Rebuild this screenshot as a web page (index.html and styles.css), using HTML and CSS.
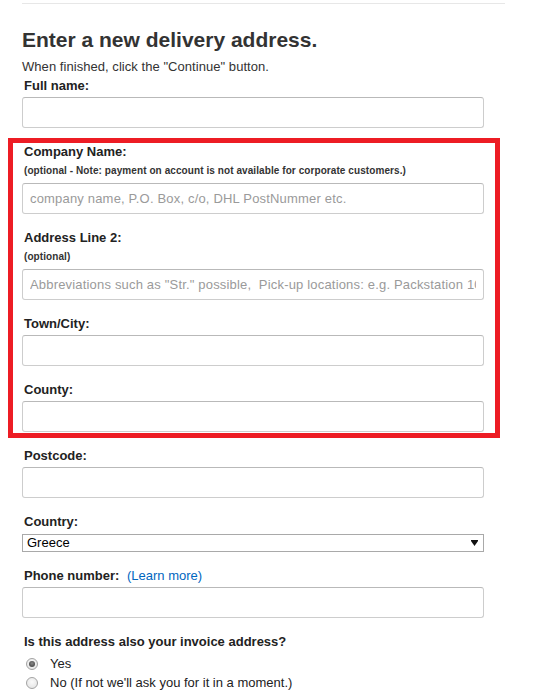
FILE: index.html
```html
<!DOCTYPE html>
<html lang="en">
<head>
<meta charset="utf-8">
<title>Enter a new delivery address</title>
<link rel="stylesheet" href="styles.css">
</head>
<body>
<div class="page">
  <div class="topline"></div>
  <h1 class="title">Enter a new delivery address.</h1>
  <p class="intro">When finished, click the "Continue" button.</p>
  <form class="form">
    <div class="field first">
      <label class="label">Full name:</label>
      <input class="input" type="text">
    </div>

    <div class="highlight">
      <div class="field first">
        <label class="label">Company Name:</label>
        <div class="note">(optional - Note: payment on account is not available for corporate customers.)</div>
        <input class="input" type="text" placeholder="company name, P.O. Box, c/o, DHL PostNummer etc.">
      </div>
      <div class="field">
        <label class="label">Address Line 2:</label>
        <div class="note">(optional)</div>
        <input class="input" type="text" placeholder="Abbreviations such as &quot;Str.&quot; possible, &#160;Pick-up locations: e.g. Packstation 101">
      </div>
      <div class="field">
        <label class="label">Town/City:</label>
        <input class="input" type="text">
      </div>
      <div class="field">
        <label class="label">County:</label>
        <input class="input" type="text">
      </div>
    </div>

    <div class="field after-box">
      <label class="label">Postcode:</label>
      <input class="input" type="text">
    </div>
    <div class="field">
      <label class="label">Country:</label>
      <div class="select-wrap">
        <select class="select">
          <option>Greece</option>
        </select>
        <svg class="select-arrow" width="7" height="6" viewBox="0 0 7 6"><path d="M0 0H7V1L3.5 6L0 1Z" fill="#111"/></svg>
      </div>
    </div>
    <div class="field">
      <label class="label">Phone number: <a class="learn" href="#">(Learn more)</a></label>
      <input class="input" type="text">
    </div>
    <div class="field">
      <div class="label">Is this address also your invoice address?</div>
      <div class="radios">
        <div class="radio-row"><span class="radio checked"></span><span>Yes</span></div>
        <div class="radio-row"><span class="radio"></span><span>No (If not we'll ask you for it in a moment.)</span></div>
      </div>
    </div>
  </form>
</div>
</body>
</html>
```

FILE: styles.css
```css
html, body {
  margin: 0;
  padding: 0;
  background: #fff;
}

body {
  font-family: "Liberation Sans", Arial, sans-serif;
  color: #111;
}

.page {
  width: 462px;
  padding-left: 22px;
  display: flex;
  flex-direction: column;
}

.topline {
  margin-top: 3px;
  margin-right: -21px;
  border-top: 1px solid #e7e7e7;
}

.title {
  margin: 24px 0 0 0;
  font-size: 21px;
  line-height: 24px;
  font-weight: bold;
  color: #333;
}

.intro {
  margin: 7px 0 0 0;
  font-size: 13px;
  line-height: 15px;
  color: #333;
  letter-spacing: 0.05px;
}

.form {
  display: flex;
  flex-direction: column;
  margin-top: 4px;
}

.field {
  display: flex;
  flex-direction: column;
  margin-top: 16px;
}

.field.first {
  margin-top: 0;
}

.field.after-box {
  margin-top: 10px;
}

.label {
  display: block;
  padding-left: 2px;
  font-size: 13px;
  line-height: 16px;
  font-weight: bold;
  color: #222;
  margin-bottom: 3px;
}

.note {
  padding-left: 2px;
  font-size: 10px;
  line-height: 14px;
  font-weight: bold;
  color: #333;
  letter-spacing: 0.08px;
  margin-top: 1px;
  margin-bottom: 5px;
}

.input {
  box-sizing: border-box;
  height: 31px;
  width: 100%;
  margin: 0;
  padding: 0 7px;
  border: 1px solid #cdcdcd;
  border-top-color: #b9b9b9;
  border-radius: 3px;
  background: #fff;
  font-family: "Liberation Sans", Arial, sans-serif;
  font-size: 13px;
  color: #111;
  outline: none;
}

.input::placeholder {
  color: #9a9a9a;
  opacity: 1;
  letter-spacing: 0.18px;
}

.highlight {
  margin: 10px -16px 0 -14px;
  border: 5px solid #ed1c24;
  padding: 1px 11px 1px 9px;
  display: flex;
  flex-direction: column;
}

.select-wrap {
  position: relative;
  margin-top: 1px;
}

.select {
  display: block;
  box-sizing: border-box;
  width: 100%;
  height: 18px;
  margin: 0;
  padding: 0 0 0 4px;
  border: 1px solid #a9a9a9;
  border-radius: 0;
  background: #fff;
  -webkit-appearance: none;
  appearance: none;
  font-family: "Liberation Sans", Arial, sans-serif;
  font-size: 13px;
  line-height: 16px;
  color: #000;
  outline: none;
}

.select-arrow {
  position: absolute;
  right: 6px;
  top: 6px;
  pointer-events: none;
}

.learn {
  font-weight: normal;
  color: #0066c0;
  text-decoration: none;
  margin-left: 4px;
}

.radios {
  display: flex;
  flex-direction: column;
  margin-top: 1px;
}

.radio-row {
  display: flex;
  align-items: center;
  font-size: 13px;
  line-height: 19px;
  color: #222;
}

.radio {
  box-sizing: border-box;
  width: 12px;
  height: 12px;
  margin: 0 12px 0 4px;
  border: 1px solid #a3a3a3;
  border-radius: 50%;
  background: radial-gradient(circle at 50% 40%, #fafafa 0%, #e8e8e8 70%, #dcdcdc 100%);
  display: flex;
  align-items: center;
  justify-content: center;
}

.radio.checked::after {
  content: "";
  width: 6px;
  height: 6px;
  border-radius: 50%;
  background: radial-gradient(circle at 50% 40%, #888 0%, #555 60%, #444 100%);
}
```
